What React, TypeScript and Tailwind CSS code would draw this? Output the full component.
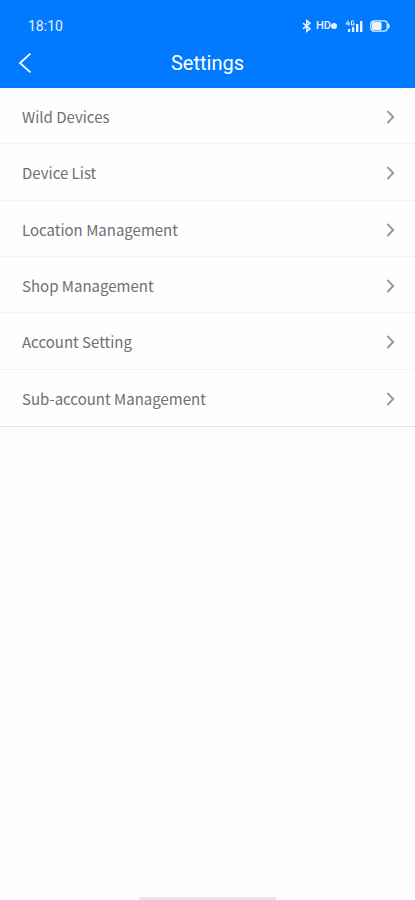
import React from "react";

const items: string[] = [
  "Wild Devices",
  "Device List",
  "Location Management",
  "Shop Management",
  "Account Setting",
  "Sub-account Management",
];

function BluetoothIcon() {
  return (
    <svg width="10" height="14" viewBox="0 0 10 14" fill="none" stroke="currentColor" strokeWidth="1.5" aria-hidden="true">
      <path d="M1 4.2 8 9.8 4.8 12.4V1.6L8 4.2 1 9.8" />
    </svg>
  );
}

function SignalIcon() {
  return (
    <svg width="19" height="14" viewBox="0 0 19 14" fill="currentColor" aria-hidden="true">
      <path d="M3.4 1.4 1 5h3.8M3.8 3v3.4M9 2H6.4v4H9V4H8" fill="none" stroke="currentColor" strokeWidth="1" />
      <rect x="3" y="10" width="2.2" height="3" />
      <rect x="7" y="8" width="2.2" height="5" />
      <rect x="11" y="5" width="2.4" height="8" />
      <rect x="15" y="2" width="2.4" height="11" />
    </svg>
  );
}

function BatteryIcon() {
  return (
    <svg width="20" height="12" viewBox="0 0 20 12" aria-hidden="true">
      <rect x="0.8" y="0.8" width="16.4" height="10.4" rx="3.4" fill="none" stroke="currentColor" strokeWidth="1.3" />
      <rect x="2" y="2" width="9.6" height="8" rx="1.4" fill="currentColor" />
      <path d="M18.3 3.6q1.2 2.4 0 4.8" fill="none" stroke="currentColor" strokeWidth="1.5" />
    </svg>
  );
}

function StatusBar() {
  return (
    <div className="flex h-9 items-end justify-between pr-[25px] pl-7 text-white/90">
      <span className="text-sm leading-5">18:10</span>
      <div className="flex h-5 items-center">
        <BluetoothIcon />
        <span className="ml-1 flex items-baseline text-[11px] leading-5 font-medium">
          HD
          <span className="size-1.5 rounded-full bg-white/90" />
        </span>
        <span className="ml-2">
          <SignalIcon />
        </span>
        <span className="ml-1.5">
          <BatteryIcon />
        </span>
      </div>
    </div>
  );
}

export default function App() {
  return (
    <div className="flex min-h-screen flex-col bg-[#fefefe] font-['Roboto',sans-serif]">
      <header className="bg-[#027aff]">
        <StatusBar />
        <div className="grid h-[52px] grid-cols-[1fr_auto_1fr] items-center pt-0.5 text-white">
          <button type="button" aria-label="Back" className="flex size-12 items-center pl-[18px]">
            <svg width="14" height="22" viewBox="0 0 14 22" fill="none" stroke="currentColor" strokeWidth="1.8" aria-hidden="true">
              <path d="M12.4 1.6 2 11l10.4 9.4" />
            </svg>
          </button>
          <h1 className="text-xl leading-6 font-normal">Settings</h1>
        </div>
      </header>

      <nav aria-label="Settings">
        <ul className="grid h-[339px] grid-rows-6 border-b border-[#e2e2e2]">
          {items.map((label) => (
            <li key={label} className="flex border-b border-[#f3f3f3] last:border-b-0">
              <button
                type="button"
                className="flex flex-1 items-center justify-between pt-[3px] pr-5 pl-[22px] text-left font-['Noto_Sans_CJK_SC',sans-serif] text-[15px] leading-6 text-[#707070]"
              >
                {label}
                <svg width="9" height="16" viewBox="0 0 9 16" fill="none" stroke="#999999" strokeWidth="1.9" aria-hidden="true">
                  <path d="M1.4 2 7.2 8l-5.8 6" />
                </svg>
              </button>
            </li>
          ))}
        </ul>
      </nav>

      <div className="mx-auto mt-auto h-[3px] w-[137px] bg-[#e6e6e6]" />
    </div>
  );
}
